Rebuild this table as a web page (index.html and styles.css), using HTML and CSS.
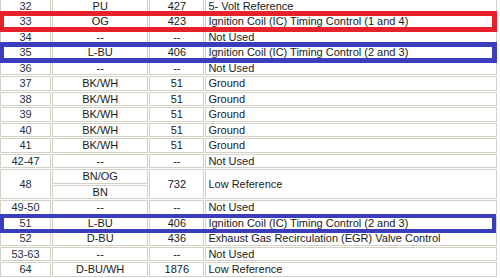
FILE: index.html
```html
<!DOCTYPE html>
<html>
<head>
<meta charset="utf-8">
<link rel="stylesheet" href="styles.css">
</head>
<body>
<div class="sheet">
  <table class="pins">
    <colgroup>
      <col class="c-pin">
      <col class="c-wire">
      <col class="c-ckt">
      <col class="c-fn">
    </colgroup>
    <tr><td class="pin">32</td><td class="wire">PU</td><td class="ckt">427</td><td class="fn">5- Volt Reference</td></tr>
    <tr><td class="pin">33</td><td class="wire">OG</td><td class="ckt">423</td><td class="fn">Ignition Coil (IC) Timing Control (1 and 4)</td></tr>
    <tr><td class="pin">34</td><td class="wire">--</td><td class="ckt">--</td><td class="fn">Not Used</td></tr>
    <tr><td class="pin">35</td><td class="wire">L-BU</td><td class="ckt">406</td><td class="fn">Ignition Coil (IC) Timing Control (2 and 3)</td></tr>
    <tr><td class="pin">36</td><td class="wire">--</td><td class="ckt">--</td><td class="fn">Not Used</td></tr>
    <tr><td class="pin">37</td><td class="wire">BK/WH</td><td class="ckt">51</td><td class="fn">Ground</td></tr>
    <tr><td class="pin">38</td><td class="wire">BK/WH</td><td class="ckt">51</td><td class="fn">Ground</td></tr>
    <tr><td class="pin">39</td><td class="wire">BK/WH</td><td class="ckt">51</td><td class="fn">Ground</td></tr>
    <tr><td class="pin">40</td><td class="wire">BK/WH</td><td class="ckt">51</td><td class="fn">Ground</td></tr>
    <tr><td class="pin">41</td><td class="wire">BK/WH</td><td class="ckt">51</td><td class="fn">Ground</td></tr>
    <tr><td class="pin">42-47</td><td class="wire">--</td><td class="ckt">--</td><td class="fn">Not Used</td></tr>
    <tr><td class="pin" rowspan="2">48</td><td class="wire">BN/OG</td><td class="ckt" rowspan="2">732</td><td class="fn" rowspan="2">Low Reference</td></tr>
    <tr><td class="wire">BN</td></tr>
    <tr><td class="pin">49-50</td><td class="wire">--</td><td class="ckt">--</td><td class="fn">Not Used</td></tr>
    <tr><td class="pin">51</td><td class="wire">L-BU</td><td class="ckt">406</td><td class="fn">Ignition Coil (IC) Timing Control (2 and 3)</td></tr>
    <tr><td class="pin">52</td><td class="wire">D-BU</td><td class="ckt">436</td><td class="fn">Exhaust Gas Recirculation (EGR) Valve Control</td></tr>
    <tr><td class="pin">53-63</td><td class="wire">--</td><td class="ckt">--</td><td class="fn">Not Used</td></tr>
    <tr><td class="pin">64</td><td class="wire">D-BU/WH</td><td class="ckt">1876</td><td class="fn">Low Reference</td></tr>
  </table>
  <div class="mark mark-red m33"></div>
  <div class="mark mark-blue m35"></div>
  <div class="mark mark-blue m51"></div>
</div>
</body>
</html>
```
FILE: styles.css
```css
html, body {
  margin: 0;
  padding: 0;
  background: #ffffff;
  overflow: hidden;
}
.sheet {
  position: relative;
  width: 500px;
  height: 278px;
  overflow: hidden;
}
.pins {
  margin: -2.25px 0 0 -1px;
  border-collapse: separate;
  border-spacing: 1px;
  table-layout: fixed;
  width: 499px;
  font-family: "Liberation Sans", Arial, sans-serif;
  font-size: 11px;
  color: #1a1a1a;
}
.c-pin { width: 51px; }
.c-wire { width: 96px; }
.c-ckt { width: 55px; }
.c-fn { width: 291px; }
.pins td {
  border: 1px solid #d3d0c6;
  padding: 0 2px;
  line-height: 12.5px;
  height: 12.5px;
  white-space: nowrap;
  overflow: hidden;
  vertical-align: middle;
}
.pins td.pin,
.pins td.wire,
.pins td.ckt {
  text-align: center;
}
.pins td.pin { color: #26303e; }
.pins td.fn { text-align: left; }
.mark {
  position: absolute;
  box-sizing: border-box;
  border-style: solid;
}
.mark-red { border-color: #e8222b; }
.mark-blue { border-color: #3a3ebd; }
.m33 { top: 11px; left: -1px; width: 498px; height: 21px; border-width: 5px; }
.m35 { top: 42px; left: -1px; width: 498px; height: 21px; border-width: 5px; }
.m51 { top: 214px; left: 0; width: 496px; height: 19px; border-width: 4.5px; }
```
